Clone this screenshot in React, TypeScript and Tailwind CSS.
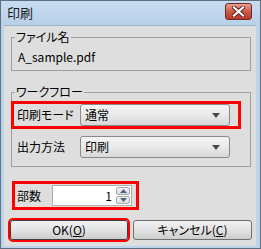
import React from "react";

const font = "font-['Noto_Sans_CJK_JP','Noto_Sans',sans-serif] [font-feature-settings:'palt']";

function Combo({ value }: { value: string }) {
  return (
    <div className="w-[150px] h-[22px] flex items-center justify-between pl-[4px] pr-[9px] border border-[#8a8a8a] rounded-[3px] bg-gradient-to-b from-[#f4f4f4] via-[#e9e9e9] to-[#d8d8d8]">
      <span className="text-[12px] leading-[16px] text-black">{value}</span>
      <svg width="8" height="5" viewBox="0 0 8 5">
        <path d="M0 0 H8 L4 5 Z" fill="#4a4a4a" />
      </svg>
    </div>
  );
}

function Legend({ children }: { children: React.ReactNode }) {
  return (
    <span className="absolute -top-[9px] left-[3px] px-[1px] bg-[#dedede] text-[12px] leading-[16px] text-black">
      {children}
    </span>
  );
}

export default function App() {
  return (
    <div className={`w-[261px] h-[249px] flex flex-col bg-[#bcd3ec] border border-[#5f6f80] ${font}`}>
      <div className="h-[24px] flex items-center justify-between pl-[6px] pr-[8px] bg-gradient-to-b from-[#c8dbf0] to-[#b9d0ea]">
        <span className="text-[13px] leading-[16px] text-[#1a1a1a]">印刷</span>
        <div className="w-[27px] h-[17px] mb-[3px] rounded-[3px] border border-[#6e2a22] bg-gradient-to-b from-[#e3a093] via-[#cf5a4a] to-[#b8382a] flex items-center justify-center">
          <svg width="13" height="11" viewBox="0 0 13 11">
            <path d="M2 1.5 L11 9.5 M11 1.5 L2 9.5" stroke="#5a1e18" strokeWidth="4" strokeLinecap="square" />
            <path d="M2 1.5 L11 9.5 M11 1.5 L2 9.5" stroke="#ffffff" strokeWidth="2.2" strokeLinecap="square" />
          </svg>
        </div>
      </div>
      <div className="flex-1 ml-[3px] mr-[4px] mb-[2px] bg-[#dedede] border-t border-[#9fb3c8] flex flex-col pt-[11px]">
        {/* Group 1 */}
        <div className="relative ml-[7px] w-[240px] h-[34px] border border-[#a0a0a0] pl-[6px] pt-[11px]">
          <Legend>ファイル名</Legend>
          <div className="text-[12px] leading-[16px] text-black">A_sample.pdf</div>
        </div>
        {/* Group 2 */}
        <div className="relative ml-[7px] mt-[21px] w-[240px] h-[75px] border border-[#a0a0a0] pt-[11px] flex flex-col gap-[10px]">
          <Legend>ワークフロー</Legend>
          <div className="ml-[2px] w-[224px] h-[22px] flex items-center pl-[3px] outline-[3px] outline-solid outline-[#ff0000]">
            <span className="w-[63px] text-[12px] leading-[16px] text-black">印刷モード</span>
            <Combo value="通常" />
          </div>
          <div className="ml-[2px] w-[224px] h-[22px] flex items-center pl-[3px]">
            <span className="w-[63px] text-[12px] leading-[16px] text-black">出力方法</span>
            <Combo value="印刷" />
          </div>
        </div>
        {/* Copies */}
        <div className="ml-[11px] mt-[17px] w-[121px] h-[23px] flex items-center pl-[2px] outline-[3px] outline-solid outline-[#ff0000]">
          <span className="w-[35px] text-[12px] leading-[16px] text-black">部数</span>
          <div className="flex h-[21px] border border-[#abadb3] bg-white">
            <div className="w-[62px] flex items-center justify-end pr-[3px] text-[12px] leading-[16px] text-black">1</div>
            <div className="w-[16px] flex flex-col gap-[1px] p-[1px] bg-white">
              <div className="flex-1 flex items-center justify-center border border-[#a8a8a8] rounded-[2px] bg-gradient-to-b from-[#f3f3f3] to-[#dcdcdc]">
                <svg width="7" height="4" viewBox="0 0 7 4"><path d="M0 4 L3.5 0 L7 4 Z" fill="#4d6185" /></svg>
              </div>
              <div className="flex-1 flex items-center justify-center border border-[#a8a8a8] rounded-[2px] bg-gradient-to-b from-[#f3f3f3] to-[#dcdcdc]">
                <svg width="7" height="4" viewBox="0 0 7 4"><path d="M0 0 L7 0 L3.5 4 Z" fill="#4d6185" /></svg>
              </div>
            </div>
          </div>
        </div>
        {/* Buttons */}
        <div className="ml-[6px] mt-[13px] flex gap-[5px]">
          <div className="w-[118px] h-[20px] flex items-center justify-center border border-[#3c3c3c] rounded-[3px] bg-gradient-to-b from-[#f2f2f2] via-[#e3e3e3] to-[#cdcdcd] outline-[2px] outline-solid outline-[#ff0000] text-[12px] leading-[16px] text-black">
            OK(<span className="underline">O</span>)
          </div>
          <div className="w-[119px] h-[20px] flex items-center justify-center border border-[#707070] rounded-[3px] bg-gradient-to-b from-[#f2f2f2] via-[#e3e3e3] to-[#cdcdcd] text-[12px] leading-[16px] text-black">
            キャンセル(<span className="underline">C</span>)
          </div>
        </div>
      </div>
    </div>
  );
}
